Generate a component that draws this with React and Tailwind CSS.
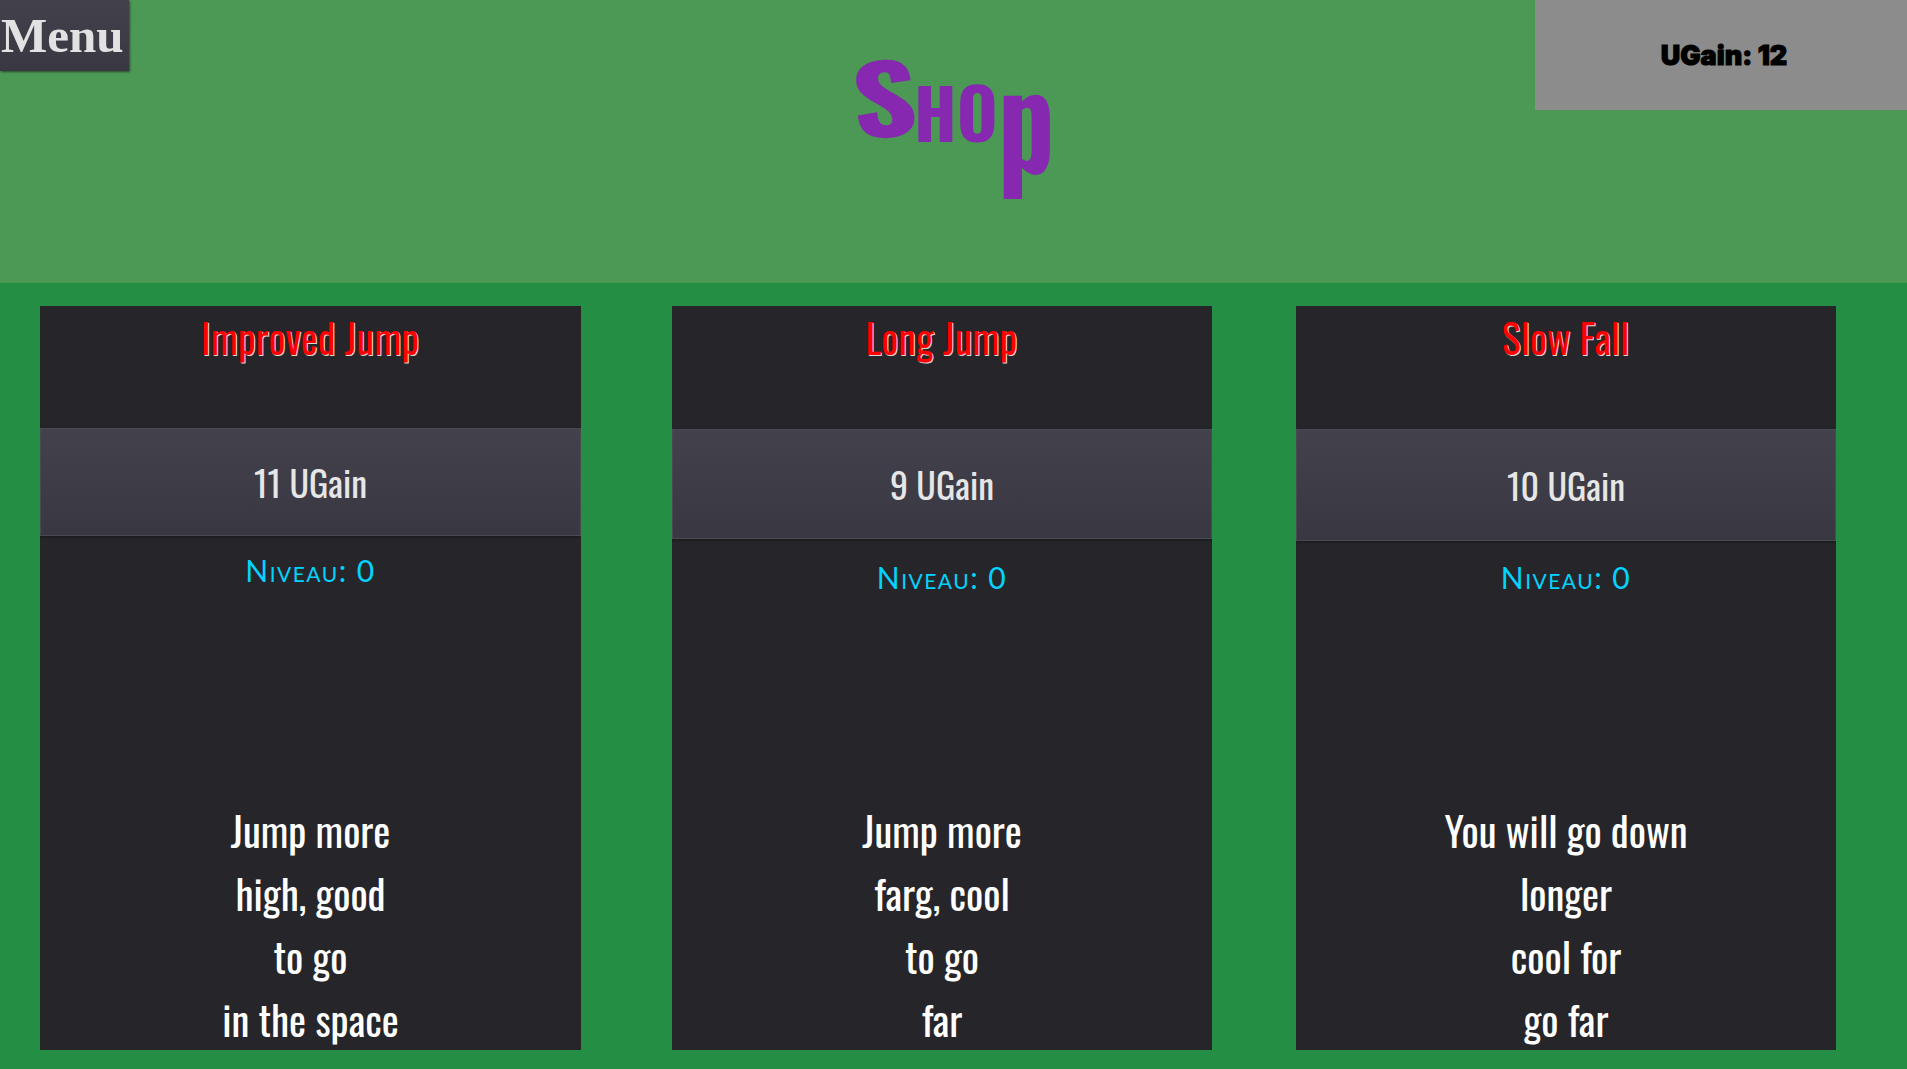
const condensed = "font-['Oswald','Liberation_Sans_Narrow','Liberation_Sans',sans-serif]";

const items = [
  {
    title: "Improved Jump",
    price: "11 UGain",
    titleBox: "h-[122px]",
    priceBox: "h-[108px]",
    levelBox: "h-[68px]",
    gap: "h-[195px]",
    lines: ["Jump more", "high, good", "to go", "in the space"],
    width: "w-[541px] mr-[91px]",
  },
  {
    title: "Long Jump",
    price: "9 UGain",
    titleBox: "h-[123px]",
    priceBox: "h-[110px]",
    levelBox: "h-[76px]",
    gap: "h-[184px]",
    lines: ["Jump more", "farg, cool", "to go", "far"],
    width: "w-[540px] mr-[84px]",
  },
  {
    title: "Slow Fall",
    price: "10 UGain",
    titleBox: "h-[123px]",
    priceBox: "h-[112px]",
    levelBox: "h-[72px]",
    gap: "h-[186px]",
    lines: ["You will go down", "longer", "cool for", "go far"],
    width: "w-[540px]",
  },
];

function ShopCard({ item }) {
  return (
    <div className={`${item.width} h-[744px] bg-[#26262a] flex flex-col overflow-hidden`}>
      <div className={`${item.titleBox} shrink-0 pt-[5px] pr-[1px] text-center text-[40px] leading-[52px] text-[#ff0000] [text-shadow:1px_1px_0_#d8d8d8] ${condensed}`}>
        {item.title}
      </div>
      <div
        className={`${item.priceBox} shrink-0 flex items-center justify-center bg-gradient-to-b from-[#42414c] to-[#393842] border border-[#4a4a52] shadow-[0_1px_3px_rgba(0,0,0,0.4)] text-[36px] text-[#e6e6e6] ${condensed}`}
      >
        {item.price}
      </div>
      <div className={`${item.levelBox} shrink-0 flex items-center justify-center text-[30px] tracking-[1.5px] text-[#00d4ff] font-['Lato',sans-serif] [font-variant:small-caps]`}>
        Niveau: 0
      </div>
      <div className={`${item.gap} shrink-0`} />
      <div className={`shrink-0 text-center text-[40.5px] leading-[63px] text-white ${condensed}`}>
        {item.lines.map((line) => (
          <div key={line}>{line}</div>
        ))}
      </div>
    </div>
  );
}

function App() {
  return (
    <div className="w-full h-[1069px] bg-[#238e44] flex flex-col overflow-hidden">
      <header className="relative h-[283px] shrink-0 bg-[#4b9954] flex justify-center">
        <button className="absolute left-0 top-0 w-[129px] h-[71px] bg-gradient-to-b from-[#42414c] to-[#393842] shadow-[1px_1px_2px_rgba(0,0,0,0.5)] pl-[1px] text-left text-[49px] leading-[70px] font-bold text-[#e2e2e2] font-['Liberation_Serif',serif]">
          Menu
        </button>
        <h1 className={`flex items-start h-fit pt-[40px] pl-[4px] font-bold text-[#8629b0] ${condensed}`}>
          <span className="text-[94px] leading-[110px] scale-x-[1.35] -rotate-3">S</span>
          <span className="ml-[6px] mt-[25px] text-[70px] leading-[90px]">HO</span>
          <span className="-mt-[14px] ml-[3px] text-[100px] leading-[130px] origin-top scale-x-[1.12] scale-y-[1.34]">p</span>
        </h1>
        <div className="absolute right-0 top-0 w-[372px] h-[110px] pl-[6px] pt-[2px] bg-[#8c8c8c] flex items-center justify-center text-[27px] font-black text-black [-webkit-text-stroke:1px_black] font-['Inter',sans-serif]">
          UGain: 12
        </div>
      </header>
      <main className="flex pl-[40px] pt-[23px]">
        {items.map((item) => (
          <ShopCard key={item.title} item={item} />
        ))}
      </main>
    </div>
  );
}

export default App;
